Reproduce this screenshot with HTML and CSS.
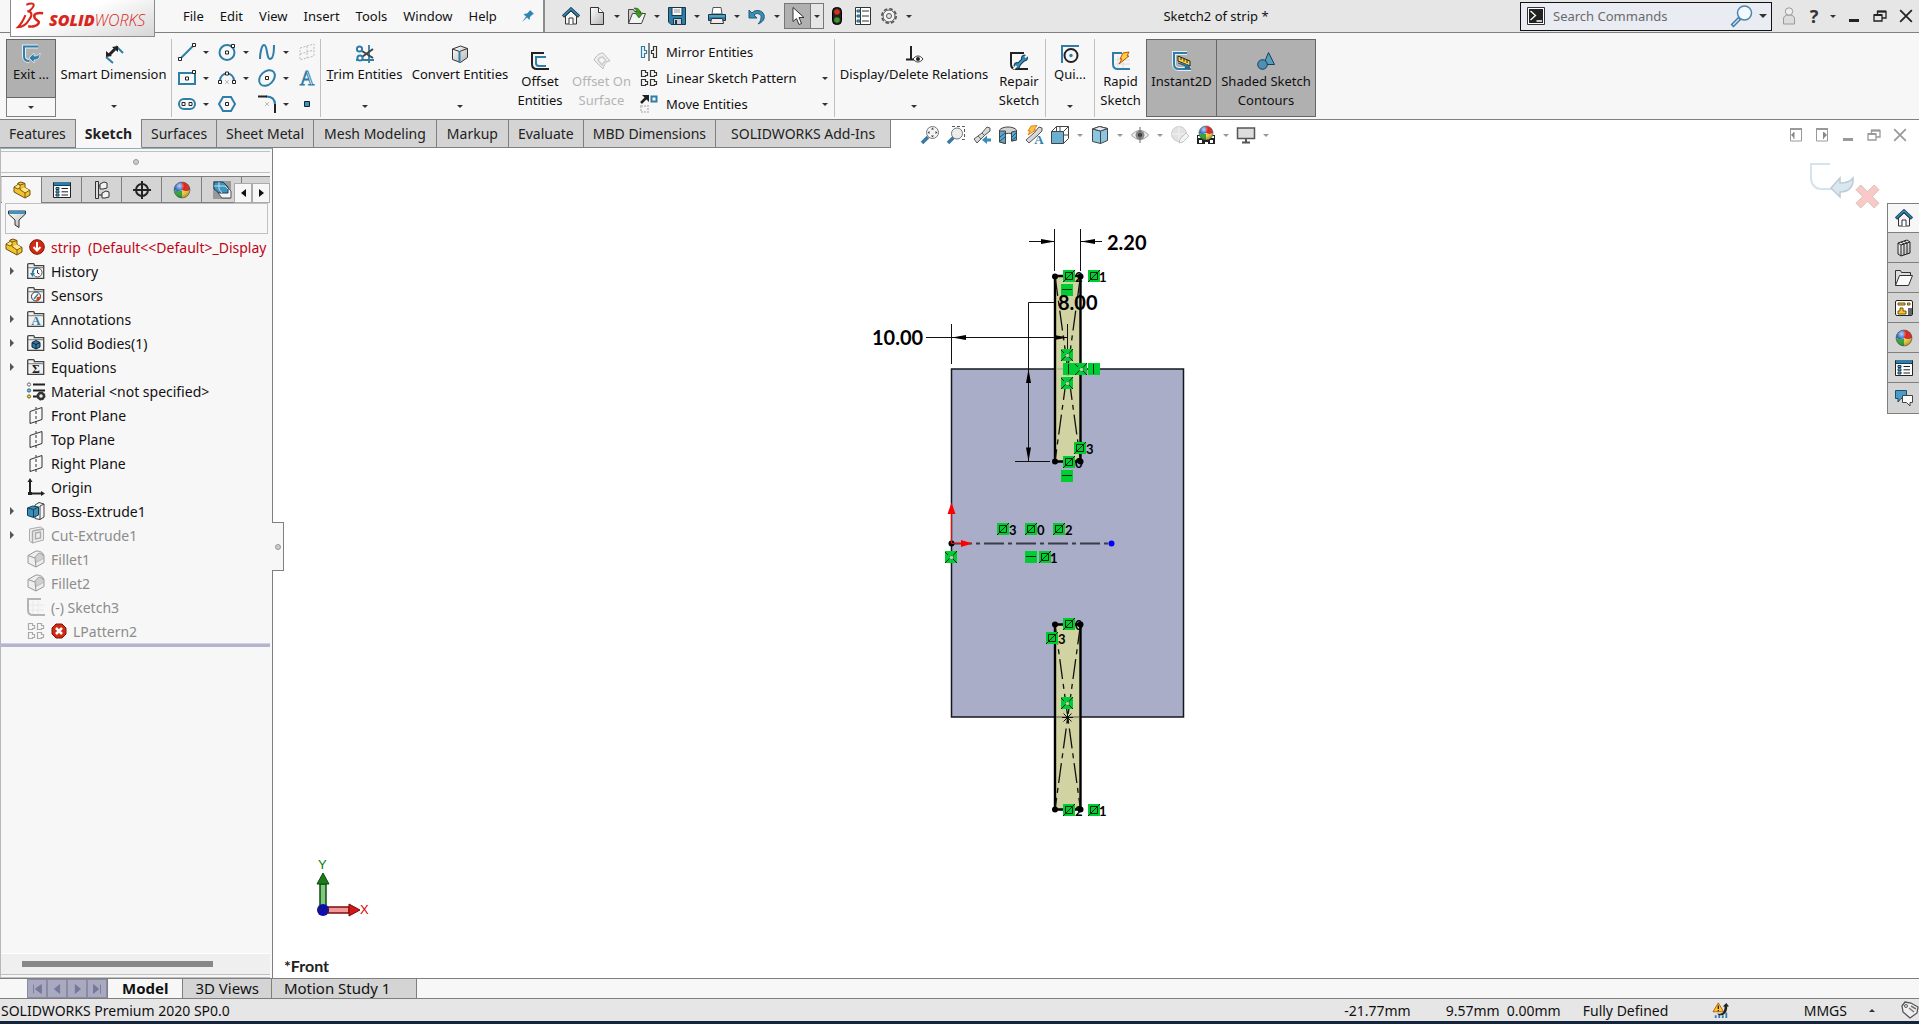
FILE: index.html
```html
<!DOCTYPE html>
<html lang="en">
<head>
    <meta charset="UTF-8">
    <meta name="viewport" content="width=device-width, initial-scale=1.0">
    <title>Sketch2 of strip *</title>
    <link rel="stylesheet" href="styles.css">
</head>
<body>
    <!-- shared icons -->
    <svg class="defs" aria-hidden="true">
        <defs>
            <linearGradient id="steel" x1="0" y1="0" x2="1" y2="1">
                <stop offset="0" stop-color="#fff"/><stop offset="1" stop-color="#b4b4b4"/>
            </linearGradient>
            <radialGradient id="shine" cx="0.35" cy="0.25" r="0.8">
                <stop offset="0" stop-color="#fff" stop-opacity="0.7"/><stop offset="0.4" stop-color="#fff" stop-opacity="0"/><stop offset="1" stop-color="#000" stop-opacity="0.35"/>
            </radialGradient>
        </defs>
        <symbol id="home" viewBox="0 0 18 18">
            <path d="M3.500 9v8h11V9L9 4z" fill="#f5f5f5" stroke="#333"/>
            <path d="M7 17v-6h4v6" fill="#fff" stroke="#333"/>
            <path d="M1 9.500 9 2l8 7.500" fill="none" stroke="#173f57" stroke-width="3.200"/>
            <path d="M1.500 9 9 2l7.500 7" fill="none" stroke="#3b8db5" stroke-width="1.400"/>
        </symbol>
        <symbol id="part" viewBox="0 0 18 18">
            <path d="M1 6 5 3.500V2l3-1 4 1.500v4l5 3v4.500L12 17 1 11z" fill="#f2c230" stroke="#6b5212"/>
            <path d="M1 6l4 2 2-1.500V4l5-1.500M7 4 4.500 2.500M7 6.500v2L12 12l5-3M12 12v5" fill="none" stroke="#6b5212" stroke-width="0.900"/>
            <path d="m2 5.700 3-1.700 1.500.8V6L5 7.200zM8 8.300l3.500-1.800L16 9l-4 2.300z" fill="#ffe98a"/>
        </symbol>
        <symbol id="ball" viewBox="0 0 18 18">
            <path d="M9 9V1a8 8 0 0 0-8 8c3 1.500 5 1.500 8 0z" fill="#2f62c8"/>
            <path d="M9 9V1a8 8 0 0 1 8 8c-3 1.500-5 1.500-8 0z" fill="#d8241c"/>
            <path d="M9 9.500C6 10.500 4 10.500 1 9a8 8 0 0 0 8 8z" fill="#2da32d"/>
            <path d="M9 9.500c3 1 5 1 8-.5a8 8 0 0 1-8 8z" fill="#f0d038"/>
            <circle cx="9" cy="9" r="8" fill="url(#shine)" stroke="#444" stroke-width="0.500"/>
        </symbol>
        <symbol id="list" viewBox="0 0 18 18">
            <path d="M.5 1.500h17v15H.5z" fill="#fdfdfd" stroke="#222"/>
            <path d="M1 1h16v3H1z" fill="#2f7ea8"/><path d="M.5 4.500h17" stroke="#173f57"/>
            <path d="M3 6.500h3v2H3zM3 9.800h3v2H3zM3 13h3v2H3z" fill="#5db1d8" stroke="#173f57"/>
            <path d="M8.500 7.500H15M8.500 10.800H15M8.500 14H15" stroke="#222"/>
        </symbol>
        <symbol id="folder" viewBox="0 0 18 18">
            <path d="M.7 16.300V2.700C.7 2 1 1.700 1.700 1.700h4.600c.7 0 1 .3 1 1v1h9.400v12.600z" fill="#f1f1f1" stroke="#444" stroke-width="1.300"/>
            <path d="M1 5.700h15.500" stroke="#777"/>
        </symbol>
        <symbol id="plane" viewBox="0 0 18 18">
            <path d="m3 5.500 12-4v12l-12 4z" fill="none" stroke="#333"/>
            <path d="M9 1v2M9 5v3M9 10v3M9 15v3" stroke="#333"/>
        </symbol>
        <symbol id="fillet" viewBox="0 0 18 18">
            <path d="M1 5.500 9 1c5 0 8 2 8 6v5.500L9 17l-8-4z" fill="#eee" stroke="#999"/>
            <path d="M1 5.500 8 8l1 9M8 8c1-3 3-4.500 5-5l4 2.500" fill="none" stroke="#999"/>
            <path d="M8.500 7.500c1-3 3-4 5-4l3 3v2l-7 4z" fill="#d0d0d0" stroke="#aaa" stroke-width="0.600"/>
        </symbol>
        <symbol id="pattern" viewBox="0 0 18 18">
            <path d="M1.500 1.500h4v2h2v3h-2v1h-4zM10.500 1.500h4v2h2v3h-2v1h-4zM1.500 10.500h4v2h2v3h-2v1h-4zM10.500 10.500h4v2h2v3h-2v1h-4z" fill="none" stroke="currentColor" stroke-width="1.200"/>
        </symbol>
        <symbol id="restore" viewBox="0 0 14 12">
            <path d="M1 5h8v6H1zM4.500 4V1.500H13V8H9.500" fill="none" stroke="currentColor" stroke-width="1.300"/><path d="M4 1.500h9M1 5h8" stroke="currentColor" stroke-width="2"/>
        </symbol>
        <symbol id="close" viewBox="0 0 12 12">
            <path d="m1 1 10 10M11 1 1 11" fill="none" stroke="currentColor" stroke-width="1.500"/>
        </symbol>
        <!-- sketch relation flags -->
        <symbol id="relEq" viewBox="0 0 12 12">
            <path d="M0 0h12v12H0z" fill="#00cc33"/><path d="M2.500 2.500h7v7h-7zM0 12 12 0" fill="none" stroke="#002800"/>
        </symbol>
        <symbol id="relMid" viewBox="0 0 12 12">
            <path d="M0 0h12v12H0z" fill="#00cc33"/><path d="m0 12 4.500-4.500M12 12 8 8M8 4.500 12 0M0 1l3 3" stroke="#002800"/><circle cx="6.500" cy="6.500" r="2" fill="#9be0a8" stroke="#444" stroke-dasharray="1 1"/>
        </symbol>
        <symbol id="relH" viewBox="0 0 12 12">
            <path d="M0 0h12v12H0z" fill="#00cc33"/><path d="M1 5.500h10" stroke="#002800"/>
        </symbol>
        <symbol id="relV" viewBox="0 0 12 12">
            <path d="M0 0h12v12H0z" fill="#00cc33"/><path d="M5.500 1v10" stroke="#002800"/>
        </symbol>
    </svg>

    <header class="titlebar">
        <div class="menubar">
            <div class="logo">
                <svg class="logo-mark" viewBox="0 0 30 28" aria-hidden="true">
                    <path d="M10 2c7-3 11-1 5 5-1 1-2 2-4 2 5 0 6 4 2 9-3 5-8 8-12 8 3-3 6-8 8-13" fill="none" stroke="#d9261c" stroke-width="2.200"/>
                    <path d="M28 11c-7-1-11 1-9 5 1 3 6 3 4 6s-7 4-11 3" fill="none" stroke="#d9261c" stroke-width="2.600"/>
                </svg>
                <span class="logo-text"><b>SOLID</b>WORKS</span>
            </div>
            <nav class="menus">
                <button>File</button>
                <button>Edit</button>
                <button>View</button>
                <button>Insert</button>
                <button>Tools</button>
                <button>Window</button>
                <button>Help</button>
            </nav>
            <button class="pin" aria-label="Pin menu">
                <svg class="icon-sm" viewBox="0 0 14 14"><path d="m9 1 4 4-1.500.5L9 8l-.5 3L6 8.500 1 13l4-5.500L2.500 5 6 4.500 8.500 2z" fill="#2f86b5"/></svg>
            </button>
        </div>

        <div class="quickbar">
            <button aria-label="Home"><svg class="icon"><use href="#home"/></svg></button>
            <button aria-label="New"><svg class="icon" viewBox="0 0 18 18"><path d="M2.500.5h8l5 5v12h-13z" fill="url(#steel)" stroke="#333"/><path d="M10.500.5v5h5" fill="#fff" stroke="#333"/></svg></button>
            <button class="caret" aria-label="New options"></button>
            <button aria-label="Open"><svg class="icon" viewBox="0 0 18 18"><path d="M.5 16.500V2.500h5l1 2h6v3" fill="#ccc" stroke="#444"/><path d="m.5 16.500 4-10h13l-4 10z" fill="#f4f4f4" stroke="#444"/><path d="M6 1c5 0 6 2 6 5h3l-4 5-4-5h2c0-2-1-3-3-5z" fill="#3d9a1c" stroke="#1c5a08" stroke-width="0.600"/></svg></button>
            <button class="caret" aria-label="Open options"></button>
            <button aria-label="Save"><svg class="icon" viewBox="0 0 18 18"><path d="M.5.500h17v17H3l-2.500-2.500z" fill="#2f7ea8" stroke="#16384c"/><path d="M4 .5h10v8H4z" fill="#f6f6f6" stroke="#16384c"/><path d="M6 3h6M6 5h6" stroke="#999"/><path d="M5.500 11.500h8v6h-8z" fill="#ccc" stroke="#16384c"/><path d="M7 13h2v4H7z" fill="#16384c"/></svg></button>
            <button class="caret" aria-label="Save options"></button>
            <button aria-label="Print"><svg class="icon" viewBox="0 0 18 18"><path d="M4 7 5 .5h8L14 7z" fill="#fff" stroke="#555"/><path d="M.5 7.500h17v6H.5z" fill="#2f7ea8" stroke="#16384c"/><path d="M1 9h16" stroke="#7cc0e0"/><path d="M3.500 11.500h11l1 5h-13z" fill="#eee" stroke="#333"/></svg></button>
            <button class="caret" aria-label="Print options"></button>
            <button aria-label="Undo"><svg class="icon" viewBox="0 0 18 18"><path d="M1 3v8h8L6 8c3-3 8-1 7 3 0 2-1 4-3 6 5-2 7-5 6-9-1-5-9-6-12-2z" fill="#3b8db5" stroke="#1f5a7a"/></svg></button>
            <button class="caret" aria-label="Undo options"></button>
            <span class="select-tool">
                <button class="pressed" aria-label="Select"><svg class="icon" viewBox="0 0 18 18"><path d="M4 .5v14l3.500-3 2.500 6 2.500-1-2.500-6h5z" fill="#fff" stroke="#333"/></svg></button>
                <button class="caret-box" aria-label="Select options"><i class="caret"></i></button>
            </span>
            <button aria-label="Rebuild"><svg class="icon" viewBox="0 0 18 18"><rect x="4.500" y=".5" width="9" height="17" rx="4" fill="#222" stroke="#000"/><circle cx="9" cy="5" r="2.800" fill="#d9301c"/><circle cx="9" cy="13" r="2.800" fill="#3a9a28"/></svg></button>
            <button aria-label="File properties"><svg class="icon" viewBox="0 0 18 18"><path d="M1.500.5h15v17h-15z" fill="#fff" stroke="#333"/><path d="M6.500 1v16" stroke="#333"/><path d="M3 3h3v2H3zM3 8h3v2H3zM3 13h3v2H3z" fill="#5db1d8" stroke="#1f5a7a"/><path d="M8 4h7M8 9h7M8 14h7" stroke="#333"/></svg></button>
            <button aria-label="Options"><svg class="icon" viewBox="0 0 18 18"><circle cx="9" cy="9" r="7.200" fill="none" stroke="#555" stroke-width="1.600" stroke-dasharray="3.600 2.055"/><circle cx="9" cy="9" r="6" fill="#f4f4f4" stroke="#555"/><circle cx="9" cy="9" r="2.500" fill="#e6e6e6" stroke="#555"/></svg></button>
            <button class="caret" aria-label="More options"></button>
        </div>

        <h1 class="doc-title">Sketch2 of strip *</h1>

        <div class="title-right">
            <div class="search">
                <svg class="icon" viewBox="0 0 18 18"><path d="M.5.500h17v17H.5z" fill="#fff" stroke="#333"/><path d="M2 2h14v14H2z" fill="#222"/><path d="m3.500 4 5 4.500-5 4.500M9.500 14H15" fill="none" stroke="#fff" stroke-width="1.300"/></svg>
                <input type="text" placeholder="Search Commands" aria-label="Search Commands">
                <svg class="icon-lg" viewBox="0 0 22 22"><path d="m1 21 8-8" stroke="#3b78a5" stroke-width="4"/><path d="m2 20 6-6" stroke="#cfe4f2" stroke-width="1.500"/><circle cx="13.500" cy="8" r="7" fill="#f2f8fc" stroke="#4d86ae" stroke-width="1.500"/></svg>
                <i class="caret"></i>
            </div>
            <button aria-label="Login"><svg class="icon" viewBox="0 0 18 18"><path d="M3.500 17v-5c0-3 2-4 5.500-4s5.500 1 5.500 4v5z" fill="#ddd" stroke="#999"/><circle cx="9" cy="4.500" r="3.700" fill="#eee" stroke="#999"/></svg></button>
            <button class="help">?</button>
            <button class="caret" aria-label="Help options"></button>
            <button class="win-btn" aria-label="Minimize"><i class="min-mark"></i></button>
            <button class="win-btn" aria-label="Restore"><svg class="icon-sm"><use href="#restore"/></svg></button>
            <button class="win-btn" aria-label="Close"><svg class="icon-sm"><use href="#close"/></svg></button>
        </div>
    </header>

    <section class="ribbon">
        <div class="exit-tool">
            <button class="exit-main"><svg class="icon" viewBox="0 0 18 18"><path d="M16 1.500H2V11c0 3 2 5 5 5" fill="none" stroke="#e4eef3" stroke-width="4"/><path d="M16 1.500H2V11c0 3 2 5 5 5" fill="none" stroke="#2f7ea8" stroke-width="2"/><path d="m7 13 5-5v3c3 0 5-1 6-3 0 5-2 7-6 7v3z" fill="#2f7ea8" stroke="#e4eef3" stroke-width="0.800"/></svg><span>Exit ...</span></button>
            <button class="exit-more" aria-label="Exit options"><i class="caret"></i></button>
        </div>
        <button class="tool tool-dim"><svg class="icon" viewBox="0 0 18 18"><path d="m1 12 7 6M11 1l7 7" stroke="#2f7ea8" stroke-width="2"/><path d="m4 10 6-6" stroke="#222" stroke-width="3"/><path d="M1 12V6l6 5zM13 1v6L7 2z" fill="#222"/></svg><span>Smart Dimension</span><i class="caret"></i></button>

        <div class="sketch-grid">
            <button aria-label="Line"><svg class="icon" viewBox="0 0 18 18"><path d="M2 16 16 2" stroke="#2f7ea8" stroke-width="2"/><path d="M.5 14.500h3v3h-3zM14.500.5h3v3h-3z" fill="#fff" stroke="#222"/></svg><i class="caret"></i></button>
            <button aria-label="Circle"><svg class="icon" viewBox="0 0 18 18"><circle cx="9" cy="9.500" r="7.500" fill="none" stroke="#2f7ea8" stroke-width="2"/><path d="M13.500 1.500h3v3h-3zM7.500 8h3v3h-3z" fill="#fff" stroke="#222"/></svg><i class="caret"></i></button>
            <button aria-label="Spline"><svg class="icon" viewBox="0 0 18 18"><path d="M2 16C2 9 4 2 6 2c4 0 2 14 6 14 3 0 4-7 4-14" fill="none" stroke="#2f7ea8" stroke-width="2"/></svg><i class="caret"></i></button>
            <button aria-label="Plane" disabled><svg class="icon" viewBox="0 0 18 18"><path d="m2 5 14-4v12L2 17zM9 3v12M2 11l14-4" fill="none" stroke="#bbb" stroke-dasharray="2 1.500"/></svg></button>
            <button aria-label="Rectangle"><svg class="icon" viewBox="0 0 18 18"><path d="M1 4h16v11H1z" fill="none" stroke="#2f7ea8" stroke-width="2"/><path d="M7.500 8h3v3h-3zM14.500 1.500h3v3h-3z" fill="#fff" stroke="#222"/></svg><i class="caret"></i></button>
            <button aria-label="Arc"><svg class="icon" viewBox="0 0 18 18"><path d="M2 12c0-10 14-10 14 0" fill="none" stroke="#2f7ea8" stroke-width="2"/><path d="M.5 11.500h3v3h-3zM14.500 11.500h3v3h-3zM7.500 3h3v3h-3z" fill="#fff" stroke="#222"/><path d="m7 11 4 4m0-4-4 4" stroke="#bbb"/></svg><i class="caret"></i></button>
            <button aria-label="Ellipse"><svg class="icon" viewBox="0 0 18 18"><ellipse cx="9" cy="9" rx="9" ry="6.500" transform="rotate(-45 9 9)" fill="none" stroke="#2f7ea8" stroke-width="2"/><path d="M7.500 7.500h3v3h-3z" fill="#fff" stroke="#222"/></svg><i class="caret"></i></button>
            <button aria-label="Text"><svg class="icon" viewBox="0 0 18 18"><text x="9" y="16" text-anchor="middle" class="glyph-a">A</text></svg></button>
            <button aria-label="Slot"><svg class="icon" viewBox="0 0 18 18"><rect x="1" y="4" width="16" height="10" rx="5" fill="none" stroke="#2f7ea8" stroke-width="2"/><path d="M4 7.500h3v3H4zM11 7.500h3v3h-3z" fill="#fff" stroke="#222"/></svg><i class="caret"></i></button>
            <button aria-label="Polygon"><svg class="icon" viewBox="0 0 18 18"><path d="M5 2h8l4 7-4 7H5L1 9z" fill="none" stroke="#2f7ea8" stroke-width="2"/><path d="M7.500 7.500h3v3h-3z" fill="#fff" stroke="#222"/></svg></button>
            <button aria-label="Sketch fillet"><svg class="icon" viewBox="0 0 18 18"><path d="M8 1.500c6 0 9 3 9 8" fill="none" stroke="#2f7ea8" stroke-width="2"/><path d="M0 1.500h9M17 9v9" stroke="#222" stroke-width="2"/><path d="m7 7 4 4m0-4-4 4" stroke="#bbb"/></svg><i class="caret"></i></button>
            <button aria-label="Point"><svg class="icon" viewBox="0 0 18 18"><path d="M6.500 6.500h5v5h-5z" fill="#3f93bd" stroke="#123"/></svg></button>
        </div>

        <button class="tool tool-trim"><svg class="icon" viewBox="0 0 18 18"><path d="M13 0v18M0 15h18" stroke="#2f7ea8" stroke-width="1.800"/><path d="m6 6 11 7M6 12l11-8" stroke="#444" stroke-width="2"/><circle cx="3.500" cy="4" r="2.600" fill="#fff" stroke="#2f7ea8" stroke-width="2"/><circle cx="4" cy="13" r="2.600" fill="#fff" stroke="#2f7ea8" stroke-width="2"/></svg><span><u>T</u>rim Entities</span><i class="caret"></i></button>
        <button class="tool tool-convert"><svg class="icon" viewBox="0 0 18 18"><path d="m1.500 4 8-3 7 2.500v9l-7 5-8-3z" fill="url(#steel)" stroke="#333"/><path d="m1.500 4 7 2.500 8-3" fill="none" stroke="#333"/><path d="M8.500 6.500v11" stroke="#2f7ea8" stroke-width="2"/></svg><span>Convert Entities</span><i class="caret"></i></button>
        <button class="tool low tool-offset"><svg class="icon" viewBox="0 0 18 18"><path d="M13 1H1v11c0 3 2 5 5 5h12" fill="none" stroke="#222" stroke-width="2"/><path d="M15 5H5v6c0 2 1 3 3 3h7" fill="none" stroke="#2f7ea8" stroke-width="2"/></svg><span>Offset<br>Entities</span></button>
        <button class="tool low tool-surface" disabled><svg class="icon" viewBox="0 0 18 18"><path d="M1 8c2-4 5-7 9-7l7 8c-4 0-6 4-7 8z" fill="#eee" stroke="#bbb"/><path d="M5 8c1-2 3-3 5-3l3 4c-2 0-3 2-4 4z" fill="#f7f7f7" stroke="#ccc" stroke-width="1.500"/></svg><span>Offset On<br>Surface</span></button>
        <div class="tool-list">
            <button><svg class="icon" viewBox="0 0 18 18"><path d="M9 0v18" stroke="#111"/><path d="M1.500 3.500h3v4h2v3h-2v4h-3z" fill="none" stroke="#2f7ea8" stroke-width="1.200"/><path d="M16.500 3.500h-3v4h-2v3h2v4h3z" fill="none" stroke="#333" stroke-width="1.200"/></svg><span>Mirror Entities</span></button>
            <button><svg class="icon dark"><use href="#pattern"/></svg><span>Linear Sketch Pattern</span><i class="caret"></i></button>
            <button><svg class="icon" viewBox="0 0 18 18"><path d="m1 8 5-5" stroke="#222" stroke-width="2.500"/><path d="M2 0h7v7z" fill="#222"/><path d="M11.500 1.500h5v5h-5z" fill="#fff" stroke="#2f7ea8" stroke-width="2"/><path d="M1 11h7v6H1z" fill="none" stroke="#ccc" stroke-width="2" stroke-dasharray="2 1"/></svg><span>Move Entities</span><i class="caret"></i></button>
        </div>
        <button class="tool tool-rel"><svg class="icon" viewBox="0 0 18 18"><path d="M6 1v14M1 14.500h8" stroke="#222" stroke-width="2"/><path d="M8 14c3-4 7-4 10 0-3 4-7 4-10 0z" fill="#fff" stroke="#333"/><circle cx="13" cy="14" r="2" fill="#222"/></svg><span>Display/Delete Relations</span><i class="caret"></i></button>
        <button class="tool low tool-repair"><svg class="icon" viewBox="0 0 18 18"><path d="M14 1H1v11c0 3 2 5 5 5h12" fill="none" stroke="#222" stroke-width="2"/><path d="m7 14 7-7" stroke="#173f57" stroke-width="4"/><circle cx="14.500" cy="6" r="3" fill="#2f7ea8" stroke="#173f57"/><circle cx="7" cy="13.500" r="3" fill="#2f7ea8" stroke="#173f57"/><path d="m7 14 7-7" stroke="#3f93bd" stroke-width="2"/><path d="m15 5.500 3-3M6.500 14l-3 3" stroke="#f7f7f7" stroke-width="2"/></svg><span>Repair<br>Sketch</span></button>
        <button class="tool tool-quick"><svg class="icon" viewBox="0 0 18 18"><path d="M0 1h18" stroke="#2f7ea8" stroke-width="2"/><path d="M1 2v16" stroke="#2f7ea8" stroke-width="2"/><circle cx="10" cy="10.500" r="6.500" fill="none" stroke="#222" stroke-width="2"/><circle cx="10" cy="10.500" r="1.700" fill="#2f7ea8"/></svg><span>Qui...</span><i class="caret"></i></button>
        <button class="tool low tool-rapid"><svg class="icon" viewBox="0 0 18 18"><path d="M6 4v13M11 4v13M3 8h15M3 12h15" stroke="#ddd"/><path d="M10 1H1v11c0 3 2 5 5 5h12" fill="none" stroke="#2f7ea8" stroke-width="2"/><path d="m11 1 6-1-2 4h2L7 12l3-5H8z" fill="#ffd23a" stroke="#c05010"/></svg><span>Rapid<br>Sketch</span></button>
        <button class="tool low tool-instant pressed"><svg class="icon" viewBox="0 0 18 18"><path d="M14 1H1v11c0 3 2 5 5 5h12" fill="none" stroke="#e4eef3" stroke-width="4"/><path d="M14 1H1v11c0 3 2 5 5 5h12" fill="none" stroke="#2f7ea8" stroke-width="2"/><path d="m5 4 12 5v5L5 9z" fill="#ffd23a" stroke="#222"/><path d="M8 5v3M11 6.500v3M14 8v3" stroke="#222"/><path d="m5 11 8 3-1 2 5 0-3-4" fill="#2f7ea8" stroke="#1f5a7a"/></svg><span>Instant2D</span></button>
        <button class="tool low tool-shaded pressed"><svg class="icon" viewBox="0 0 18 18"><path d="m11.500.5 6 12h-11z" fill="#5a9cbd" stroke="#173f57"/><circle cx="5.500" cy="12.500" r="4.800" fill="#4d90b3" stroke="#173f57"/></svg><span>Shaded Sketch<br>Contours</span></button>
    </section>

    <div class="tabrow">
        <nav class="cmd-tabs">
            <button>Features</button>
            <button class="active">Sketch</button>
            <button>Surfaces</button>
            <button>Sheet Metal</button>
            <button class="wide">Mesh Modeling</button>
            <button class="wide">Markup</button>
            <button>Evaluate</button>
            <button>MBD Dimensions</button>
            <button class="last">SOLIDWORKS Add-Ins</button>
        </nav>
        <div class="viewbar">
            <button aria-label="Zoom to fit"><svg class="icon" viewBox="0 0 18 18"><path d="m1 17 6-6" stroke="#3b78a5" stroke-width="3.500"/><circle cx="11.500" cy="6.500" r="6" fill="#f4f4f4" stroke="#777"/><path d="M11.500 1.500 10 3.500h3zM11.500 11.500 10 9.500h3zM6.500 6.500l2-1.500v3zM16.500 6.500l-2-1.500v3z" fill="#444"/></svg></button>
            <button aria-label="Zoom to area"><svg class="icon" viewBox="0 0 18 18"><path d="M5 .5h12.500v13H13" fill="none" stroke="#555" stroke-dasharray="3 2"/><path d="m1 17 6-6" stroke="#3b78a5" stroke-width="3.500"/><circle cx="10" cy="7.500" r="5.500" fill="#ededed" stroke="#777"/></svg></button>
            <button aria-label="Previous view"><svg class="icon" viewBox="0 0 18 18"><path d="m1 13 8-6 5-6 3 1v3l-5 4-8 8z" fill="url(#steel)" stroke="#555"/><path d="m9 7 3 3M5 10l3 3" stroke="#666"/><path d="M12 14h6" stroke="#3b8db5" stroke-width="3"/><path d="m14 9.500-5 4.500 5 4z" fill="#3b8db5"/></svg></button>
            <button aria-label="Section view"><svg class="icon" viewBox="0 0 18 18"><path d="M.5 4c3-4 14-4 17 0v10l-5 1V8c-2-1-4-1-6 0v9.500l-6-1.500z" fill="#d4d4d4" stroke="#444"/><path d="M.5 5h6v12.500l-6-1.500zM12.500 6l5-1v9l-5 1z" fill="#5aa7ca" stroke="#444"/><path d="m1 11 5-4M1 15l5-4M13 11l4-4M13 14l4-3" stroke="#1f5a7a"/></svg></button>
            <button aria-label="Dynamic annotation views"><svg class="icon" viewBox="0 0 18 18"><path d="m1 14 8-7 5-6 3 1v3l-5 5-8 7z" fill="url(#steel)" stroke="#555"/><path d="m6 0 6-.5L9 4h2L3 9l2-4H3z" fill="#ffc23a" stroke="#d06010" stroke-width="0.700"/><text x="14" y="18" text-anchor="middle" class="glyph-sm">A</text></svg></button>
            <button aria-label="View orientation"><svg class="icon" viewBox="0 0 18 18"><path d="M.5 5.500h12v12H.5z" fill="#6bb0d0" stroke="#444"/><path d="m.5 5.500 5-5h12v12l-5 5M12.500 5.500l5-5M5.500.5v5M12.500 9h5M9 .5v5" fill="none" stroke="#444"/></svg></button>
            <button class="caret" aria-label="View orientation options"></button>
            <button aria-label="Display style"><svg class="icon" viewBox="0 0 18 18"><path d="m1.500 3 7-2.500 8 2v12l-7 3-8-2z" fill="#8cc6e0" stroke="#444"/><path d="m1.500 3 8 2v12.500M9.500 5l7-2.500" fill="none" stroke="#444"/><path d="m1.500 3 7-2.500 8 2-7 2.500z" fill="#ddeef6" stroke="#444"/></svg></button>
            <button class="caret" aria-label="Display style options"></button>
            <button aria-label="Hide/show items"><svg class="icon" viewBox="0 0 18 18"><path d="M.5 9C5 3 13 3 17.500 9 13 15 5 15 .5 9z" fill="#f0f0f0" stroke="#999"/><circle cx="9" cy="9" r="4.500" fill="#888"/><circle cx="9" cy="9" r="2" fill="#222"/><path d="M9 1v16" stroke="#666"/></svg></button>
            <button class="caret" aria-label="Hide/show options"></button>
            <button aria-label="Edit appearance" disabled><svg class="icon" viewBox="0 0 18 18"><circle cx="8" cy="8" r="7.500" fill="#e2e2e2" stroke="#ccc"/><path d="M.5 8h15M8 .5v15" stroke="#f2f2f2"/><path d="m8 17 1-4 6-6 3 3-6 6z" fill="#f4f4f4" stroke="#c4c4c4"/></svg></button>
            <button aria-label="Apply scene"><svg class="icon" viewBox="0 0 18 18"><path d="M0 9h18v9H0z" fill="#222"/><path d="M1 10h3v2H1zM14 10h3v2h-3zM2 14h3v3H2zM8 16h3v2H8zM13 14h3v3h-3z" fill="#fff"/><use href="#ball" x="1" y="-1" width="16" height="16"/></svg></button>
            <button class="caret" aria-label="Scene options"></button>
            <button aria-label="View settings"><svg class="icon" viewBox="0 0 18 18"><path d="M.5 2h17v10.500H.5z" fill="#ddd" stroke="#555" stroke-width="1.500"/><path d="M9 13v3M5 16.500h8" stroke="#555" stroke-width="2"/></svg></button>
            <button class="caret" aria-label="View settings options"></button>
        </div>
        <div class="doc-controls">
            <button aria-label="Previous pane"><svg class="icon-sm" viewBox="0 0 14 14"><path d="M1.500 1v12h11V1" fill="none" stroke="#999"/><path d="M1 1h12" stroke="#999" stroke-width="2"/><path d="m2 7 3-3v6z" fill="#888"/><path d="M5 4v7" stroke="#888"/></svg></button>
            <button aria-label="Next pane"><svg class="icon-sm" viewBox="0 0 14 14"><path d="M1.500 1v12h11V1" fill="none" stroke="#999"/><path d="M1 1h12" stroke="#999" stroke-width="2"/><path d="m12 7-3-3v6z" fill="#888"/><path d="M8.500 4v7" stroke="#888"/></svg></button>
            <button class="win-btn" aria-label="Minimize document"><i class="min-mark"></i></button>
            <button aria-label="Restore document"><svg class="icon-sm"><use href="#restore"/></svg></button>
            <button aria-label="Close document"><svg class="icon-sm"><use href="#close"/></svg></button>
        </div>
    </div>

    <main class="workspace">
        <aside class="sidebar">
            <div class="splitter"><i class="dot"></i></div>
            <div class="manager-tabs">
                <button class="active" aria-label="Feature tree"><svg class="icon"><use href="#part"/></svg></button>
                <button aria-label="Properties"><svg class="icon"><use href="#list"/></svg></button>
                <button aria-label="Configurations"><svg class="icon" viewBox="0 0 18 18"><path d="M4 1v16M4 5h4M4 14h5M4 9h2" fill="none" stroke="#222"/><path d="M2.500.5h3v17h-3z" fill="#ddd" stroke="#333"/><path d="m7 3 4-2 3 1v5l-4 1H7zM9 12l4-2 3 1v5l-4 1H9z" fill="#f2f2f2" stroke="#333"/></svg></button>
                <button aria-label="Dimensions"><svg class="icon" viewBox="0 0 18 18"><circle cx="9" cy="9" r="6" fill="none" stroke="#222" stroke-width="2"/><path d="M9 0v18M0 9h18" stroke="#222" stroke-width="2"/></svg></button>
                <button aria-label="Display manager"><svg class="icon"><use href="#ball"/></svg></button>
                <button aria-label="CAM"><svg class="icon" viewBox="0 0 18 18"><path d="M0 0h18v18H0z" fill="#999"/><path d="m5 6 8-1 5 5v7H9l-4-5z" fill="#f4f4f4" stroke="#555"/><path d="M1 1h9l5 5v6H6L1 8z" fill="#3f93bd" stroke="#173f57"/><path d="M1 5h11l3 3M6 1v7l3 4" fill="none" stroke="#bfe0ef"/></svg></button>
                <div class="tab-scroll">
                    <button aria-label="Scroll left"><i class="arrow-left"></i></button>
                    <button aria-label="Scroll right"><i class="arrow-right"></i></button>
                </div>
            </div>
            <label class="filter">
                <svg class="icon" viewBox="0 0 18 18"><path d="M.5 1v3L7 10v5l4 2.500V10l6.500-6V1z" fill="url(#steel)" stroke="#333"/><path d="M1 1h16v3H1z" fill="#3f93bd"/></svg>
                <input type="text" aria-label="Filter tree">
            </label>
            <ul class="tree">
                <li class="root"><svg class="icon"><use href="#part"/></svg><svg class="icon-md" viewBox="0 0 16 16"><circle cx="8" cy="8" r="7.300" fill="#d22a12" stroke="#7c1408"/><path d="M8 3v8M4.500 8 8 11.500 11.500 8" fill="none" stroke="#fff" stroke-width="2"/></svg><span>strip&nbsp; (Default&lt;&lt;Default&gt;_Display</span></li>
                <li class="parent"><svg class="icon" viewBox="0 0 18 18"><use href="#folder"/><circle cx="10.500" cy="10.500" r="4.500" fill="#fff" stroke="#555"/><path d="M10.500 8v3l2 1" fill="none" stroke="#333"/><path d="M3 11h5l-2.500 4z" fill="#2f7ea8"/><path d="M5.500 11c0-3 2-5 5-5" fill="none" stroke="#2f7ea8" stroke-width="1.500"/></svg><span>History</span></li>
                <li><svg class="icon" viewBox="0 0 18 18"><use href="#folder"/><circle cx="9" cy="10.500" r="4.500" fill="#fff" stroke="#333"/><path d="M13.500 10.500A4.500 4.500 0 0 1 9 15l1-4z" fill="#d9401c"/><path d="m7 13 4-5" stroke="#2f7ea8" stroke-width="1.500"/></svg><span>Sensors</span></li>
                <li class="parent"><svg class="icon" viewBox="0 0 18 18"><use href="#folder"/><text x="9" y="15" text-anchor="middle" class="glyph-sm">A</text></svg><span>Annotations</span></li>
                <li class="parent"><svg class="icon" viewBox="0 0 18 18"><use href="#folder"/><path d="m5 8.500 4-2 4 2v4.500l-4 2-4-2z" fill="#2f7ea8" stroke="#123"/><path d="m5 8.500 4 2 4-2M9 10.500V15" fill="none" stroke="#123"/></svg><span>Solid Bodies(1)</span></li>
                <li class="parent"><svg class="icon" viewBox="0 0 18 18"><use href="#folder"/><text x="9" y="15" text-anchor="middle" class="glyph-sum">Σ</text></svg><span>Equations</span></li>
                <li><svg class="icon" viewBox="0 0 18 18"><path d="M6 2.500h12M6 8.500h12M6 14.500h5" stroke="#222" stroke-width="2"/><circle cx="2" cy="2.500" r="1.600" fill="#fff" stroke="#666"/><circle cx="2" cy="8.500" r="1.600" fill="#7cc6ea" stroke="#1f5a7a"/><circle cx="2" cy="14.500" r="1.600" fill="#ffd23a" stroke="#7a5a10"/><circle cx="14" cy="14" r="3" fill="#eee" stroke="#333" stroke-width="2.400"/><circle cx="14" cy="14" r="4" fill="none" stroke="#333" stroke-dasharray="1.600 1.540"/></svg><span>Material &lt;not specified&gt;</span></li>
                <li><svg class="icon"><use href="#plane"/></svg><span>Front Plane</span></li>
                <li><svg class="icon"><use href="#plane"/></svg><span>Top Plane</span></li>
                <li><svg class="icon"><use href="#plane"/></svg><span>Right Plane</span></li>
                <li><svg class="icon" viewBox="0 0 18 18"><path d="M3 2v13.500h13" fill="none" stroke="#222" stroke-width="2"/><path d="M3 0 .5 4h5zM18 15.500 14 13v5zM1 14h4v3H1z" fill="#222"/></svg><span>Origin</span></li>
                <li class="parent"><svg class="icon" viewBox="0 0 18 18"><path d="m8 3 4-2.500 5 1.500v13l-4 2.500-5-1z" fill="#f4f4f4" stroke="#444"/><path d="M13 4v13.500M13 4l4-2" stroke="#444"/><path d="m.5 6 5-2 6 1v8l-5 2.500-6-2z" fill="#3b8db5" stroke="#123f57"/><path d="m.5 6 6 1.500L11.500 5M6.500 7.500v8" fill="none" stroke="#123f57"/></svg><span>Boss-Extrude1</span></li>
                <li class="parent muted"><svg class="icon" viewBox="0 0 18 18"><path d="m2.500 3 11-2 3 2v11l-11 3-3-2z" fill="#eee" stroke="#aaa"/><path d="M5.500 5v12M5.500 5l11-2M8.500 7l5-1v6l-5 1z" fill="none" stroke="#aaa" stroke-width="1.400"/></svg><span>Cut-Extrude1</span></li>
                <li class="muted"><svg class="icon"><use href="#fillet"/></svg><span>Fillet1</span></li>
                <li class="muted"><svg class="icon"><use href="#fillet"/></svg><span>Fillet2</span></li>
                <li class="muted"><svg class="icon" viewBox="0 0 18 18"><path d="M6 3v13M11 3v13M2 7h15M2 12h15" stroke="#e8e8e8"/><path d="M14 1H1v11c0 3 2 5 5 5h12" fill="none" stroke="#b4b4b4" stroke-width="2"/></svg><span>(-) Sketch3</span></li>
                <li class="muted"><svg class="icon light"><use href="#pattern"/></svg><svg class="icon-md" viewBox="0 0 16 16"><path d="M5 1h6l4 4v6l-4 4H5l-4-4V5z" fill="#d22a12" stroke="#7c1408"/><path d="m5 5 6 6M11 5l-6 6" stroke="#fff" stroke-width="2.500"/></svg><span>LPattern2</span></li>
            </ul>
            <div class="rollback"></div>
            <div class="side-scroll"><div class="thumb"></div></div>
            <div class="side-foot"></div>
            <button class="collapse" aria-label="Collapse panel"><i class="dot"></i></button>
        </aside>

        <section class="viewport">
            <svg class="scene" viewBox="273 148 1646 830" role="img" aria-label="Sketch view">
                <path d="M951.500 369h232v348h-232z" fill="#a9adc8" stroke="#15171f" stroke-width="1.500"/>

                <!-- upper strip -->
                <path d="M1055 276h25.500v185.500H1055z" fill="#d2d3a2" stroke="#000" stroke-width="2.400"/>
                <path d="M1056 369h23" stroke="#a3a580"/>
                <path class="construction" d="m1055 276 25.500 185.500M1080.500 276 1055 461.500"/>
                <!-- lower strip -->
                <path d="M1055 624.500h25.500v185H1055z" fill="#d2d3a2" stroke="#000" stroke-width="2.400"/>
                <path d="M1056 717h23" stroke="#55564a"/>
                <path class="construction" d="m1055 624.500 25.500 185M1080.500 624.500 1055 809.500"/>
                <path d="M1062 717.500h11M1067.500 712v11M1063.500 713.500l8 8M1071.500 713.500l-8 8" stroke="#111"/>

                <!-- centre line and origin -->
                <path class="centerline" d="M952 543.500h160"/>
                <circle cx="1111.500" cy="543.500" r="3" fill="#00f"/>

                <g fill="#000">
                    <circle cx="951.500" cy="543.500" r="3"/>
                    <circle cx="1055" cy="276.500" r="3"/><circle cx="1080.500" cy="276.500" r="3"/>
                    <circle cx="1055" cy="461.500" r="3"/><circle cx="1080.500" cy="461.500" r="3"/>
                    <circle cx="1055" cy="624.500" r="3"/><circle cx="1080.500" cy="624.500" r="3"/>
                    <circle cx="1055" cy="809.500" r="3"/><circle cx="1080.500" cy="809.500" r="3"/>
                </g>
                <path d="M951.500 543.500V512M951.500 543.500H962" stroke="#f00"/>
                <path d="M951.500 502.500 955.500 514h-8zM972.500 543.500 961 540v7z" fill="#f00"/>

                <!-- dimensions -->
                <path d="M1054.500 229v42M1080.500 229v42M1029 241.500h26M1080 241.500h22M1055 302.500h-26.500v159M1015 461.500h35M926 337.500h141M951.500 324v40M1067.500 324v33" fill="none" stroke="#111"/>
                <path d="m1055 241.500-14-2.500v5zM1081 241.500l14-2.500v5zM1028.500 369l-2.500 14h5zM1028.500 461.500l-2.500-14h5zM952 337.500l14-2.500v5zM1068 337.500l-14-2.500v5z" fill="#000"/>

                <use href="#relEq" x="1063" y="270" width="12" height="12"/>
                <use href="#relEq" x="1088" y="270" width="12" height="12"/>
                <use href="#relH" x="1061" y="284" width="12" height="12"/>
                <use href="#relMid" x="1061" y="349" width="12" height="12"/>
                <use href="#relMid" x="1075" y="363" width="12" height="12"/>
                <use href="#relV" x="1063" y="363" width="12" height="12"/>
                <use href="#relV" x="1088" y="363" width="12" height="12"/>
                <use href="#relMid" x="1061" y="377" width="12" height="12"/>
                <use href="#relEq" x="1074" y="442" width="12" height="12"/>
                <use href="#relEq" x="1063" y="456" width="12" height="12"/>
                <use href="#relH" x="1061" y="470" width="12" height="12"/>
                <use href="#relEq" x="997" y="523" width="12" height="12"/>
                <use href="#relEq" x="1025" y="523" width="12" height="12"/>
                <use href="#relEq" x="1053" y="523" width="12" height="12"/>
                <use href="#relMid" x="945" y="551" width="12" height="12"/>
                <use href="#relH" x="1025" y="551" width="12" height="12"/>
                <use href="#relEq" x="1039" y="551" width="12" height="12"/>
                <use href="#relEq" x="1063" y="618" width="12" height="12"/>
                <use href="#relEq" x="1046" y="632" width="12" height="12"/>
                <use href="#relMid" x="1061" y="697" width="12" height="12"/>
                <use href="#relEq" x="1063" y="804" width="12" height="12"/>
                <use href="#relEq" x="1088" y="804" width="12" height="12"/>
                <g class="rel-num">
                    <text x="1075" y="282">2</text>
                    <text x="1099" y="282">1</text>
                    <text x="1086" y="454">3</text>
                    <text x="1075" y="468">0</text>
                    <text x="1009" y="535">3</text>
                    <text x="1037" y="535">0</text>
                    <text x="1065" y="535">2</text>
                    <text x="1050" y="563">1</text>
                    <text x="1075" y="630">0</text>
                    <text x="1058" y="644">3</text>
                    <text x="1075" y="816">2</text>
                    <text x="1099" y="816">1</text>
                </g>
                <g class="dim-text">
                    <text x="1107" y="250">2.20</text>
                    <text x="1058" y="310">8.00</text>
                    <text x="872" y="345">10.00</text>
                </g>

                <!-- triad -->
                <path d="M320 884h6v22h-6z" fill="#7fc97f" stroke="#0f4a12" stroke-width="1.500"/>
                <path d="m323 873 6 11h-12z" fill="#1b7a1b" stroke="#0f4a12"/>
                <path d="M328 907h21v6h-21z" fill="#f29a9a" stroke="#7c0c0c" stroke-width="1.500"/>
                <path d="m360 910-11-6v12z" fill="#d01818" stroke="#7c0c0c"/>
                <circle cx="323" cy="910" r="6" fill="#14148c"/>
                <path d="M320 906h6l-6 8h6" fill="none" stroke="#00f"/>
                <text class="axis axis-y" x="318" y="869">Y</text>
                <text class="axis axis-x" x="360" y="914">X</text>
                <text class="view-name" x="284" y="972">*Front</text>
            </svg>

            <div class="confirm">
                <button aria-label="Exit sketch"><svg class="exit-ghost" viewBox="0 0 46 38"><path d="M21 2H2v14c0 6 4 11 10 11h11" fill="none" stroke="#d3e4ee" stroke-width="2"/><path d="m22 26 9-10v5c5 0 10-1 13-5 1 9-5 14-13 14v5z" fill="#d9e8f0" stroke="#bccbd6" stroke-width="1.500"/></svg></button>
                <button class="cancel" aria-label="Cancel sketch"><svg class="cancel-ghost" viewBox="0 0 26 26"><path d="m1 6 5-5 7 7 7-7 5 5-7 7 7 7-5 5-7-7-7 7-5-5 7-7z" fill="#f8c9c6" stroke="#dcc0be"/></svg></button>
            </div>

            <nav class="taskpane">
                <button class="active" aria-label="Resources"><svg class="icon"><use href="#home"/></svg></button>
                <button aria-label="Design library"><svg class="icon" viewBox="0 0 18 18"><path d="m3 4 9-3 3 2v11l-9 3-3-2z" fill="url(#steel)" stroke="#222"/><path d="m6 6 9-3M6 6v11M9 5v11M12 4v11M6 6 3 4M9 5 6 3M12 4 9 2" fill="none" stroke="#222"/></svg></button>
                <button aria-label="File explorer"><svg class="icon" viewBox="0 0 18 18"><path d="M.5 16.500v-15h5l1 2h9v3" fill="#ddd" stroke="#333"/><path d="m.5 16.500 4-10h13l-4 10z" fill="#fafafa" stroke="#333"/></svg></button>
                <button aria-label="View palette"><svg class="icon" viewBox="0 0 18 18"><rect x=".5" y="1.500" width="17" height="15" rx="1.500" fill="#fff" stroke="#222"/><path d="M3 4h7v2H3zM12.500 4h2.500v2h-2.500zM5 9h3v3h3v3H3v-3h2z" fill="#ffc81e" stroke="#6b5212"/><path d="M13 9h4v7h-4z" fill="#666"/></svg></button>
                <button aria-label="Appearances"><svg class="icon"><use href="#ball"/></svg></button>
                <button aria-label="Custom properties"><svg class="icon"><use href="#list"/></svg></button>
                <button aria-label="Forum"><svg class="icon" viewBox="0 0 18 18"><path d="M.5 1.500h11v8H6L3 13V9.500H.5z" fill="#4b9cc4" stroke="#1f4d68"/><path d="M7.500 6.500h10v7H15V17l-3.500-3.500h-4z" fill="#fafafa" stroke="#444"/></svg></button>
            </nav>
        </section>
    </main>

    <nav class="bottom-tabs">
        <div class="tab-nav">
            <button aria-label="First tab"><svg viewBox="0 0 16 16"><path d="M4 3v10M13 3v10L6 8z" fill="#77779a" stroke="#77779a"/></svg></button>
            <button aria-label="Previous tab"><svg viewBox="0 0 16 16"><path d="M11 3v10L5 8z" fill="#77779a" stroke="#77779a"/></svg></button>
            <button aria-label="Next tab"><svg viewBox="0 0 16 16"><path d="M6 3v10l6-5z" fill="#77779a" stroke="#77779a"/></svg></button>
            <button aria-label="Last tab"><svg viewBox="0 0 16 16"><path d="M12 3v10M4 3v10l6-5z" fill="#77779a" stroke="#77779a"/></svg></button>
        </div>
        <button class="sheet active">Model</button>
        <button class="sheet">3D Views</button>
        <button class="sheet">Motion Study 1</button>
    </nav>

    <footer class="statusbar">
        <span class="product">SOLIDWORKS Premium 2020 SP0.0</span>
        <span class="coord-x">-21.77mm</span>
        <span class="coord-y">9.57mm</span>
        <span class="coord-z">0.00mm</span>
        <span class="state">Fully Defined</span>
        <svg class="icon-md status-warn" viewBox="0 0 18 18"><path d="M2 15h2v3H2zM6 14h2v4H6zM10 15h2v3h-2zM14 12h2v6h-2z" fill="#2f7ea8"/><path d="m6 1 6 10H0z" fill="#ffc81e" stroke="#b05010"/><path d="M6 4v4M6 9v1.500" stroke="#222" stroke-width="1.500"/><path d="M4 13c7 1 9-2 9-8h-2l4-4 3 4h-2c0 7-3 10-9 10z" fill="#222"/></svg>
        <button class="units">MMGS <i class="caret up"></i></button>
        <svg class="icon tags" viewBox="0 0 18 18"><path d="M1 5 4 1l6 1 7 4-1 6-7 5-7-6z" fill="#eee" stroke="#555" stroke-width="1.300"/><circle cx="5" cy="5" r="1.500" fill="none" stroke="#555"/><path d="m8 7 5 4M10 5l5 3" stroke="#777" stroke-width="1.500"/></svg>
    </footer>
    <div class="os-edge"></div>
</body>
</html>
```
FILE: styles.css
```css
* {
    margin: 0;
    padding: 0;
    box-sizing: border-box;
}

body {
    font-family: 'Noto Sans', 'Open Sans', sans-serif;
    font-size: 14px;
    line-height: 19px;
    color: #111;
    background: #fff;
    height: 100vh;
    display: flex;
    flex-direction: column;
    overflow: hidden;
}

button,
input {
    font: inherit;
    color: inherit;
    background: none;
    border: none;
    outline: none;
}

button {
    display: flex;
    align-items: center;
    justify-content: center;
    white-space: nowrap;
}

svg {
    display: block;
    flex: none;
    overflow: visible;
}

.defs {
    position: absolute;
    width: 0;
    height: 0;
}

.icon { width: 18px; height: 18px; }
.icon-sm { width: 14px; height: 14px; }
.icon-md { width: 16px; height: 16px; }
.icon-lg { width: 22px; height: 22px; }

.caret {
    flex: none;
    width: 6px;
    height: 3px;
    border: 3px solid transparent;
    border-top-color: #333;
    border-bottom: none;
}

.caret.up {
    border-top: none;
    border-bottom: 3px solid #333;
}

.glyph-a {
    font: 20px 'Liberation Serif', serif;
    fill: #fff;
    stroke: #2f7ea8;
}

.glyph-sm {
    font: bold 13px 'Liberation Serif', serif;
    fill: #2f7ea8;
}

.glyph-sum {
    font: bold 12px 'Liberation Serif', serif;
    fill: #222;
}

/* title bar */
.titlebar {
    display: flex;
    flex: none;
    height: 33px;
    font-size: 13px;
    background: #e6e6e6;
    border-bottom: 1px solid #7f7f7f;
}

.menubar {
    display: flex;
    align-items: center;
    width: 545px;
    padding-left: 10px;
    background: #f7f7f7;
    border-right: 2px solid #8c8c8c;
}

.logo {
    position: relative;
    z-index: 2;
    display: flex;
    align-items: center;
    align-self: flex-start;
    gap: 4px;
    width: 145px;
    height: 37px;
    padding-left: 6px;
    background: linear-gradient(160deg, #fff 40%, #d6d6d6);
    border: 1px solid #8c8c8c;
    border-top: none;
}

.logo-mark {
    width: 28px;
    height: 28px;
    margin-top: -4px;
}

.logo-text {
    margin-top: 4px;
    font: italic 300 16px/20px 'Open Sans', sans-serif;
    color: #d9261c;
}

.logo-text b {
    font-weight: 800;
}

.menus {
    display: flex;
    gap: 16px;
    margin-left: 28px;
}

.pin {
    margin-left: auto;
    margin-right: 8px;
}

.quickbar,
.viewbar {
    display: flex;
    align-items: center;
    gap: 8px;
}

.quickbar {
    padding-left: 17px;
}

.select-tool {
    display: flex;
    height: 26px;
    margin: 0 -4px;
    border: 1px solid #777;
}

.select-tool .pressed {
    width: 26px;
    background: #b0b0b0;
    border-right: 1px solid #777;
}

.caret-box {
    width: 12px;
}

.doc-title {
    flex: 1;
    align-self: center;
    text-align: center;
    font-size: 13px;
    font-weight: 400;
}

.title-right {
    display: flex;
    align-items: center;
    color: #222;
}

.search {
    display: flex;
    align-items: center;
    width: 252px;
    height: 29px;
    margin-right: 8px;
    padding: 0 4px 0 6px;
    background: #e9ecf2;
    border: 1px solid #111;
}

.search input {
    flex: 1;
    min-width: 0;
    padding-left: 8px;
}

.search input::placeholder {
    color: #6a6a6a;
    opacity: 1;
}

.search .caret {
    width: 8px;
    height: 4px;
    margin-left: 6px;
    border-width: 4px;
    border-bottom: none;
}

.help {
    width: 32px;
    font-size: 18px;
    font-weight: 700;
    color: #333;
}

.title-right > .caret {
    margin-right: 5px;
}

.win-btn,
.doc-controls button {
    width: 26px;
    height: 20px;
}

.min-mark {
    width: 10px;
    height: 3px;
    margin-top: 9px;
    background: currentColor;
}

/* ribbon */
.ribbon {
    display: flex;
    flex: none;
    height: 87px;
    padding: 6px 6px 2px;
    font-size: 13px;
    background: #f7f7f7;
    border-bottom: 1px solid #7f7f7f;
}

.exit-tool {
    display: flex;
    flex-direction: column;
    width: 50px;
}

.exit-main {
    flex-direction: column;
    justify-content: flex-start;
    gap: 2px;
    height: 59px;
    padding-top: 5px;
    background: #b0b0b0;
    border: 1px solid #666;
}

.exit-more {
    flex: 1;
    border: 1px solid #7f7f7f;
    border-top: none;
}

.tool {
    flex-direction: column;
    justify-content: flex-start;
    gap: 2px;
    padding-top: 6px;
}

.tool .caret {
    margin-top: 19px;
}

.tool.low {
    padding-top: 13px;
}

.tool:disabled {
    color: #b4b4b4;
}

.pressed {
    background: #b0b0b0;
}

.tool.pressed {
    border: 1px solid #666;
    padding-top: 12px;
}

.tool-dim { width: 115px; }
.tool-trim { width: 88px; }
.tool-convert { width: 104px; }
.tool-offset { width: 56px; }
.tool-surface { width: 67px; }
.tool-rel { width: 159px; }
.tool-repair { width: 52px; }
.tool-quick { width: 49px; }
.tool-rapid { width: 52px; }
.tool-instant { width: 71px; }
.tool-shaded { width: 100px; margin-left: -1px; }

.tool-rel,
.sketch-grid,
.tool-trim,
.tool-quick,
.tool-rapid {
    border-left: 1px solid #c0c0c0;
}

.sketch-grid {
    display: grid;
    grid-template-columns: 40px 40px 40px 22px;
    grid-template-rows: repeat(3, 26px);
    padding-left: 6px;
    width: 149px;
}

.sketch-grid button {
    justify-content: flex-start;
    gap: 7px;
}

.tool-list {
    display: grid;
    grid-template-rows: repeat(3, 26px);
    width: 199px;
    padding: 0 6px 0 5px;
}

.tool-list button {
    justify-content: flex-start;
    gap: 8px;
}

.tool-list .caret {
    margin-left: auto;
}

.dark { color: #333; }
.light { color: #aaa; }

/* command tabs and heads-up toolbar */
.tabrow {
    display: flex;
    flex: none;
    height: 28px;
    background: #fff;
}

.cmd-tabs {
    display: flex;
}

.cmd-tabs button {
    padding: 0 9px;
    color: #222;
    background: #d4d4d4;
    border-right: 1px solid #7f7f7f;
    border-bottom: 1px solid #7f7f7f;
}

.cmd-tabs .active {
    margin-top: -1px;
    font-weight: 700;
    background: #f7f7f7;
    border-bottom-color: #f7f7f7;
}

.cmd-tabs .wide {
    padding: 0 10px;
}

.cmd-tabs .last {
    padding: 0 15px;
}

.viewbar {
    margin-left: 30px;
}

.viewbar .caret {
    border-top-color: #999;
}

.viewbar,
.doc-controls {
    padding-top: 2px;
}

.doc-controls {
    display: flex;
    align-items: center;
    margin-left: auto;
    padding-right: 6px;
    color: #999;
}

/* workspace */
.workspace {
    display: flex;
    flex: 1;
    min-height: 0;
}

.sidebar {
    position: relative;
    display: flex;
    flex-direction: column;
    flex: none;
    width: 273px;
    background: #f7f7f7;
    border-right: 1px solid #7f7f7f;
    border-left: 1px solid #b8b8b8;
    border-top: 1px solid #8fb0ba;
}

.splitter {
    display: flex;
    align-items: center;
    justify-content: center;
    height: 22px;
    margin: 2px 2px 3px 0;
    border-top: 1px solid #c0c0c0;
    border-bottom: 1px solid #c0c0c0;
}

.dot {
    width: 6px;
    height: 6px;
    background: #ccc;
    border: 1px solid #999;
    border-radius: 50%;
}

.manager-tabs {
    position: relative;
    display: flex;
    height: 27px;
    margin-right: 2px;
    padding-left: 1px;
    background: #d4d4d4;
    border-top: 1px solid #7f7f7f;
    border-bottom: 1px solid #7f7f7f;
}

.manager-tabs > button {
    width: 40px;
    border-right: 1px solid #7f7f7f;
}

.manager-tabs .active {
    background: #f7f7f7;
    height: 26px;
}

.tab-scroll {
    position: absolute;
    right: 0;
    bottom: -1px;
    display: flex;
}

.tab-scroll button {
    width: 18px;
    height: 20px;
    background: #f7f7f7;
    border: 1px solid #aaa;
}

.arrow-left,
.arrow-right {
    border: 4px solid transparent;
}

.arrow-left {
    border-left: none;
    border-right: 5px solid #111;
}

.arrow-right {
    border-right: none;
    border-left: 5px solid #111;
}

.filter {
    display: flex;
    align-items: center;
    height: 31px;
    margin: 0 4px;
    padding-left: 2px;
    border: 1px solid #c0c0c0;
}

.filter input {
    flex: 1;
}

.tree {
    margin-right: 2px;
    padding-top: 1px;
    list-style: none;
    overflow: hidden;
}

.tree li {
    display: flex;
    align-items: center;
    gap: 6px;
    height: 24px;
    padding-left: 26px;
    white-space: nowrap;
}

.tree .root {
    padding-left: 4px;
    color: #c00418;
}

.tree .parent {
    padding-left: 9px;
}

.tree .parent::before {
    content: '';
    width: 0;
    margin-right: 7px;
    border: 4px solid transparent;
    border-left-color: #555;
    border-right: none;
}

.tree .muted {
    color: #8c8c8c;
}

.rollback {
    height: 4px;
    margin-right: 2px;
    background: #b4b4d0;
    border-top: 1px solid #d0d0e4;
}

.side-scroll {
    height: 21px;
    margin-top: auto;
    margin-right: 2px;
    padding: 7px 0 0 21px;
    background: #efefef;
    border-top: 1px solid #fff;
}

.thumb {
    width: 77%;
    height: 6px;
    background: #888;
}

.side-foot {
    height: 4px;
    margin-right: 2px;
    border-top: 1px solid #c0c0c0;
    border-bottom: 1px solid #c0c0c0;
}

.collapse {
    position: absolute;
    left: 100%;
    top: 45%;
    z-index: 2;
    width: 12px;
    height: 49px;
    background: #f7f7f7;
    border: 1px solid #7f7f7f;
    border-left: none;
}

.viewport {
    position: relative;
    flex: 1;
    min-width: 0;
    background: #fff;
}

.scene {
    width: 100%;
    height: 100%;
}

.construction {
    fill: none;
    stroke: #111;
    stroke-width: 1.3;
    stroke-dasharray: 20 5 5 5;
}

.centerline {
    stroke: #3a3d48;
    stroke-width: 2;
    stroke-dasharray: 20 4 4 4;
}

.dim-text {
    font: 700 20px Lato, sans-serif;
}

.rel-num {
    font: 700 13px Lato, sans-serif;
}

.view-name {
    font: 700 16px Lato, sans-serif;
    fill: #222;
}

.axis {
    font: 13px 'Liberation Sans', sans-serif;
}

.axis-x { fill: #e00000; }
.axis-y { fill: #008000; }

.confirm {
    position: absolute;
    top: 5px;
    right: 39px;
    display: flex;
}

.exit-ghost {
    width: 46px;
    height: 38px;
}

.cancel {
    margin-top: 31px;
}

.cancel-ghost {
    width: 25px;
    height: 25px;
}

.taskpane {
    position: absolute;
    top: 55px;
    right: 0;
    width: 32px;
    border: 1px solid #7f7f7f;
    border-right: none;
}

.taskpane button {
    width: 100%;
    height: 30px;
    background: #d4d4d4;
    border-bottom: 1px solid #7f7f7f;
}

.taskpane button:last-child {
    border-bottom: none;
}

.taskpane .active {
    height: 29px;
    background: #f7f7f7;
}

/* bottom tabs and status bar */
.bottom-tabs {
    display: flex;
    flex: none;
    height: 21px;
    padding-left: 27px;
    font-size: 15px;
    background: #f7f7f7;
    border-top: 1px solid #7f7f7f;
    border-bottom: 1px solid #7f7f7f;
}

.tab-nav {
    display: flex;
    background: #a9a9c0;
    border-right: 1px solid #7f7f7f;
}

.tab-nav button {
    width: 20px;
    border: 1px solid #8a8aa4;
}

.tab-nav svg {
    width: 14px;
    height: 14px;
}

.sheet {
    padding: 0 12px;
    background: #d4d4d4;
    border-right: 1px solid #7f7f7f;
}

.sheet.active {
    padding: 0 14px;
    font-weight: 700;
    background: #f7f7f7;
}

.sheet:last-child {
    padding-right: 26px;
}

.statusbar {
    display: flex;
    align-items: center;
    flex: none;
    height: 22px;
    padding-left: 1px;
    background: #e6e6e6;
}

.product {
    margin-right: auto;
}

.coord-y {
    width: 89px;
    text-align: right;
}

.coord-z {
    width: 61px;
    text-align: right;
}

.state {
    width: 152px;
    padding-left: 22px;
}

.status-warn {
    margin-right: 75px;
}

.units {
    gap: 22px;
    margin-right: 26px;
}

.os-edge {
    flex: none;
    height: 3px;
    background: #14243c;
}
```
